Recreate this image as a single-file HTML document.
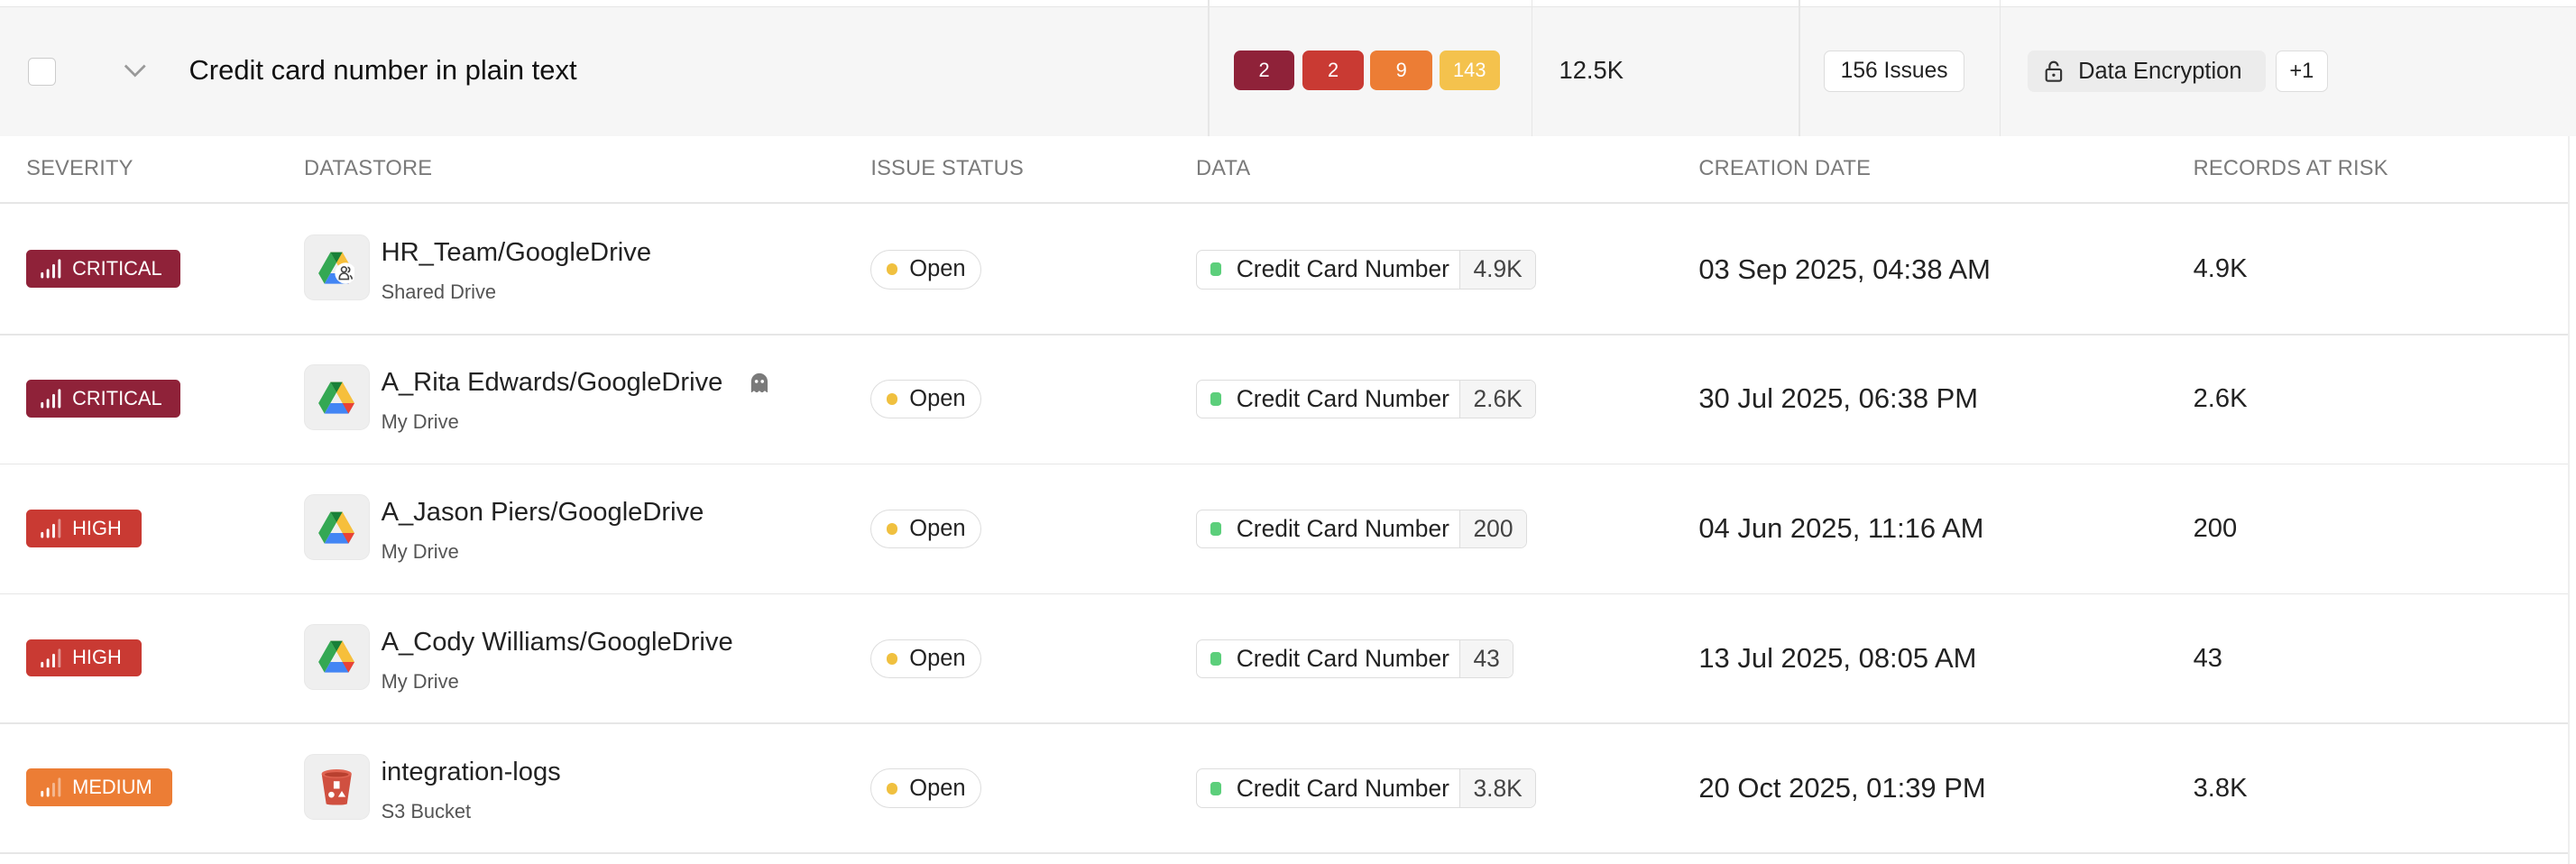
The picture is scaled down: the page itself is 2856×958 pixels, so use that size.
<!DOCTYPE html>
<html><head><meta charset="utf-8"><style>
*{box-sizing:border-box;margin:0;padding:0}
html,body{width:2856px;height:958px;overflow:hidden;background:#fff}
#w{zoom:1.82143;width:1568px;height:526px;position:relative;font-family:"Liberation Sans",sans-serif;color:#222}
.a{position:absolute}
.grp{left:0;top:4px;width:1568px;height:79px;background:#f6f6f6;border-top:1px solid #e6e6e6}
.vs{top:0;width:1px;height:83px;background:#e6e6e6}
.bd{top:31px;height:24px;border-radius:4px;color:#fff;font-size:12px;display:flex;align-items:center;justify-content:center}
.hd{top:83px;font-size:13px;color:#7a7a7a;line-height:40px;letter-spacing:.1px}
.ln{left:0;width:1563px;height:1px;background:#e6e6e6}
.sev{left:16px;height:23px;border-radius:3px;color:#fff;font-size:12px;display:flex;align-items:center;padding:0 8px 0 8px;gap:6px}
.ico{left:185px;width:40px;height:40px;border-radius:6px;background:#efefef;border:1px solid #e8e8e8;display:flex;align-items:center;justify-content:center}
.nm{left:232px;font-size:16px;color:#222}
.sb{left:232px;font-size:12px;color:#555}
.op{left:530px;height:24px;border:1px solid #ddd;border-radius:12px;font-size:14px;display:flex;align-items:center;padding:0 9px 0 9px;gap:7px;background:#fff}
.op i{width:7px;height:7px;border-radius:50%;background:#f0c03f;display:block}
.dc{left:728px;height:24px;border:1px solid #ddd;border-radius:4px;font-size:14.5px;display:flex;align-items:center;background:#fff;overflow:hidden}
.dc .l{display:flex;align-items:center;gap:9px;padding:0 6px 0 8px}
.dc .l i{width:7px;height:8px;border-radius:2px;background:#5ccf7b;display:block}
.dc .c{background:#f5f5f5;border-left:1px solid #ddd;height:100%;display:flex;align-items:center;padding:0 8px;color:#444}
.dt{left:1034px;font-size:17px}
.rk{left:1335px;font-size:16px}
</style></head><body><div id="w">
<div class="a grp"></div>
<div class="a vs" style="left:735px"></div><div class="a vs" style="left:932px"></div><div class="a vs" style="left:1095px"></div><div class="a vs" style="left:1217px"></div>
<div class="a" style="left:17px;top:35px;width:17px;height:17px;border:1px solid #ccc;border-radius:3px;background:#fff"></div>
<svg class="a" style="left:75px;top:38px" width="14" height="10" viewBox="0 0 14 10"><path d="M1 2l6 6 6-6" fill="none" stroke="#999" stroke-width="1.5"/></svg>
<div class="a" style="left:115px;top:33px;font-size:17px;color:#111">Credit card number in plain text</div>
<div class="a bd" style="left:751px;width:37px;background:#8f2239">2</div>
<div class="a bd" style="left:793px;width:37px;background:#c93a33">2</div>
<div class="a bd" style="left:834px;width:38px;background:#ec7d35">9</div>
<div class="a bd" style="left:876px;width:37px;background:#f4c24d">143</div>
<div class="a" style="left:949px;top:34px;font-size:15px">12.5K</div>
<div class="a" style="left:1110px;top:31px;width:86px;height:25px;border:1px solid #ddd;border-radius:4px;background:#fff;font-size:13.5px;display:flex;align-items:center;justify-content:center">156 Issues</div>
<div class="a" style="left:1234px;top:31px;width:145px;height:25px;border-radius:4px;background:#ececec;font-size:14px;display:flex;align-items:center;gap:9px;padding-left:10px">
<svg width="12" height="14" viewBox="0 0 12 14"><rect x="1.5" y="6" width="9" height="7" rx="1" fill="none" stroke="#333" stroke-width="1.2"/><path d="M3.5 6V4a2.5 2.5 0 0 1 5 0" fill="none" stroke="#333" stroke-width="1.2"/><circle cx="6" cy="9.5" r="0.9" fill="#333"/></svg>Data Encryption</div>
<div class="a" style="left:1385px;top:31px;width:32px;height:25px;border:1px solid #ddd;border-radius:4px;background:#fff;font-size:13px;display:flex;align-items:center;justify-content:center">+1</div>
<div class="a hd" style="left:16px">SEVERITY</div><div class="a hd" style="left:185px">DATASTORE</div><div class="a hd" style="left:530px">ISSUE STATUS</div><div class="a hd" style="left:728px">DATA</div><div class="a hd" style="left:1034px">CREATION DATE</div><div class="a hd" style="left:1335px">RECORDS AT RISK</div>
<div class="a ln" style="top:123px"></div><div class="a ln" style="top:203px"></div><div class="a ln" style="top:282px"></div><div class="a ln" style="top:361px"></div><div class="a ln" style="top:440px"></div><div class="a ln" style="top:519px"></div>
<div class="a" style="left:1563px;top:83px;width:1px;height:443px;background:#eee"></div>

<div class="a sev" style="top:152px;width:94px;background:#8f2239"><svg width="14" height="12" viewBox="0 0 14 12"><g stroke="#fff" stroke-width="1.6" stroke-linecap="round"><path d="M1.5 11V9M5 11V7M8.5 11V4M12 11V1"/></g></svg>CRITICAL</div>
<div class="a sev" style="top:231px;width:94px;background:#8f2239"><svg width="14" height="12" viewBox="0 0 14 12"><g stroke="#fff" stroke-width="1.6" stroke-linecap="round"><path d="M1.5 11V9M5 11V7M8.5 11V4M12 11V1"/></g></svg>CRITICAL</div>
<div class="a sev" style="top:310px;width:70px;background:#c93a33"><svg width="14" height="12" viewBox="0 0 14 12"><g stroke-width="1.6" stroke-linecap="round"><path d="M1.5 11V9M5 11V7M8.5 11V4" stroke="#fff"/><path d="M12 11V1" stroke="#fff" stroke-opacity=".45"/></g></svg>HIGH</div>
<div class="a sev" style="top:389px;width:70px;background:#c93a33"><svg width="14" height="12" viewBox="0 0 14 12"><g stroke-width="1.6" stroke-linecap="round"><path d="M1.5 11V9M5 11V7M8.5 11V4" stroke="#fff"/><path d="M12 11V1" stroke="#fff" stroke-opacity=".45"/></g></svg>HIGH</div>
<div class="a sev" style="top:468px;width:89px;background:#ec7d35"><svg width="14" height="12" viewBox="0 0 14 12"><g stroke-width="1.6" stroke-linecap="round"><path d="M1.5 11V9M5 11V7" stroke="#fff"/><path d="M8.5 11V4M12 11V1" stroke="#fff" stroke-opacity=".45"/></g></svg>MEDIUM</div>

<svg width="0" height="0" style="position:absolute"><defs><g id="gd"><path d="M8 1h8l8 14h-8z" fill="#f6bf3b"/><path d="M8 1l-8 14 4 7 8-14z" fill="#34a853"/><path d="M4 22h16l4-7H8z" fill="#4285f4"/><path d="M20 22l4-7h-8z" fill="#ea4335"/><path d="M8 1l4 7 4-7z" fill="#188038"/></g></defs></svg>
<div class="a ico" style="top:143px"><svg width="22" height="21" viewBox="0 0 24 23"><use href="#gd"/><circle cx="18" cy="15" r="7" fill="#fff"/><g fill="none" stroke="#444" stroke-width="1"><circle cx="17" cy="12.5" r="1.7"/><path d="M14 19v-1a3 3 0 0 1 6 0v1zM19.5 11a1.7 1.7 0 0 1 0 3.3M21 16.5a3 3 0 0 1 1.3 2.5"/></g></svg></div>
<div class="a ico" style="top:222px"><svg width="22" height="21" viewBox="0 0 24 23"><use href="#gd"/></svg></div>
<div class="a ico" style="top:301px"><svg width="22" height="21" viewBox="0 0 24 23"><use href="#gd"/></svg></div>
<div class="a ico" style="top:380px"><svg width="22" height="21" viewBox="0 0 24 23"><use href="#gd"/></svg></div>
<div class="a ico" style="top:459px"><svg width="20" height="24" viewBox="0 0 22 26"><path d="M1 4l3 20c0 1.2 14 1.2 14 0l3-20z" fill="#d05040"/><ellipse cx="11" cy="4" rx="10" ry="3" fill="#e06452"/><ellipse cx="11" cy="4.5" rx="8" ry="1.6" fill="#b8402f"/><rect x="9" y="9" width="4" height="5" fill="#fff"/><circle cx="7.5" cy="18" r="2" fill="#fff"/><path d="M14.5 15.5l2.5 4h-5z" fill="#fff"/></svg></div>

<div class="a nm" style="top:145px">HR_Team/GoogleDrive</div><div class="a sb" style="top:171px">Shared Drive</div>
<div class="a nm" style="top:224px">A_Rita Edwards/GoogleDrive</div><div class="a sb" style="top:250px">My Drive</div>
<svg class="a" style="left:456px;top:226px" width="12" height="13" viewBox="0 0 12 13"><path d="M1 13V6a5 5 0 0 1 10 0v7l-1.7-1.3L7.6 13 6 11.7 4.4 13 2.7 11.7z" fill="#7a7a7a"/><circle cx="4.2" cy="6" r="1" fill="#fff"/><circle cx="7.8" cy="6" r="1" fill="#fff"/></svg>
<div class="a nm" style="top:303px">A_Jason Piers/GoogleDrive</div><div class="a sb" style="top:329px">My Drive</div>
<div class="a nm" style="top:382px">A_Cody Williams/GoogleDrive</div><div class="a sb" style="top:408px">My Drive</div>
<div class="a nm" style="top:461px">integration-logs</div><div class="a sb" style="top:487px">S3 Bucket</div>

<div class="a op" style="top:152px"><i></i>Open</div>
<div class="a op" style="top:231px"><i></i>Open</div>
<div class="a op" style="top:310px"><i></i>Open</div>
<div class="a op" style="top:389px"><i></i>Open</div>
<div class="a op" style="top:468px"><i></i>Open</div>

<div class="a dc" style="top:152px"><span class="l"><i></i>Credit Card Number</span><span class="c">4.9K</span></div>
<div class="a dc" style="top:231px"><span class="l"><i></i>Credit Card Number</span><span class="c">2.6K</span></div>
<div class="a dc" style="top:310px"><span class="l"><i></i>Credit Card Number</span><span class="c">200</span></div>
<div class="a dc" style="top:389px"><span class="l"><i></i>Credit Card Number</span><span class="c">43</span></div>
<div class="a dc" style="top:468px"><span class="l"><i></i>Credit Card Number</span><span class="c">3.8K</span></div>

<div class="a dt" style="top:154px">03 Sep 2025, 04:38 AM</div><div class="a rk" style="top:155px">4.9K</div>
<div class="a dt" style="top:233px">30 Jul 2025, 06:38 PM</div><div class="a rk" style="top:234px">2.6K</div>
<div class="a dt" style="top:312px">04 Jun 2025, 11:16 AM</div><div class="a rk" style="top:313px">200</div>
<div class="a dt" style="top:391px">13 Jul 2025, 08:05 AM</div><div class="a rk" style="top:392px">43</div>
<div class="a dt" style="top:470px">20 Oct 2025, 01:39 PM</div><div class="a rk" style="top:471px">3.8K</div>
</div></body></html>
